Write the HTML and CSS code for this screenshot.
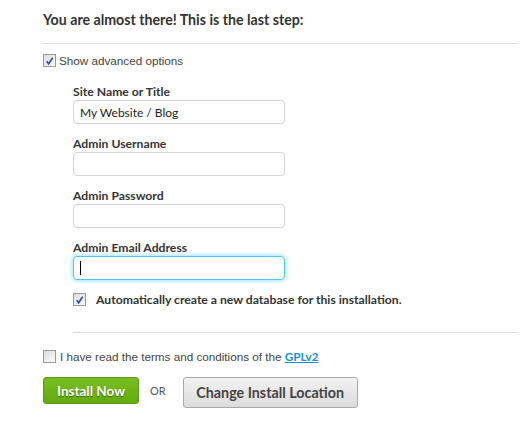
FILE: index.html
```html
<!DOCTYPE html>
<html>
<head>
<meta charset="utf-8">
<link rel="stylesheet" href="styles.css">
</head>
<body>
<div class="page">
  <h2 class="title">You are almost there! This is the last step:</h2>
  <hr class="rule">
  <label class="check-row small">
    <span class="cb checked"><svg viewBox="0 0 12 12" width="12" height="12"><path d="M3 6.2 L5 9 L9.5 2.5" fill="none" stroke="#2b4fb8" stroke-width="1.8"/></svg></span>
    <span>Show advanced options</span>
  </label>

  <div class="advanced">
    <div class="field">
      <div class="label">Site Name or Title</div>
      <div class="input">My Website / Blog</div>
    </div>
    <div class="field">
      <div class="label">Admin Username</div>
      <div class="input"></div>
    </div>
    <div class="field">
      <div class="label">Admin Password</div>
      <div class="input"></div>
    </div>
    <div class="field">
      <div class="label">Admin Email Address</div>
      <div class="input focus"><span class="caret"></span></div>
    </div>
    <label class="check-row db">
      <span class="cb checked"><svg viewBox="0 0 12 12" width="12" height="12"><path d="M3 6.2 L5 9 L9.5 2.5" fill="none" stroke="#2b4fb8" stroke-width="1.8"/></svg></span>
      <span class="db-text">Automatically create a new database for this installation.</span>
    </label>
    <hr class="rule inner">
  </div>

  <label class="check-row small terms">
    <span class="cb"></span>
    <span>I have read the terms and conditions of the <a class="gpl" href="#">GPLv2</a></span>
  </label>

  <div class="actions">
    <button class="btn green">Install Now</button>
    <span class="or">OR</span>
    <button class="btn grey">Change Install Location</button>
  </div>
</div>
</body>
</html>
```

FILE: styles.css
```css
html, body {
  margin: 0;
  padding: 0;
  background: #fff;
}
.page {
  padding: 10px 12px 0 42px;
  font-family: Lato, "Liberation Sans", sans-serif;
  color: #333;
}
.title {
  margin: 0;
  font-size: 14.2px;
  font-weight: 700;
  color: #333;
  line-height: 20px;
  padding-left: 1px;
}
.rule {
  border: 0;
  border-top: 1px solid #d9d9d9;
  margin: 13px 0 0 0;
  height: 0;
}
.check-row {
  display: flex;
  align-items: center;
}
.small {
  font-family: "Liberation Sans", Arial, sans-serif;
  font-size: 11.7px;
  color: #444;
  margin-top: 10px;
  padding-left: 1px;
}
.cb {
  width: 11px;
  height: 11px;
  border: 1px solid #9a9a9a;
  background: linear-gradient(135deg, #dcdcdc, #fbfbfb);
  display: inline-flex;
  align-items: center;
  justify-content: center;
  flex: none;
  margin-right: 3px;
}
.cb svg {
  display: block;
}
.advanced {
  padding-left: 31px;
  padding-top: 17px;
}
.field {
  margin-bottom: 12px;
}
.label {
  font-size: 12.2px;
  font-weight: 700;
  color: #333;
  line-height: 16px;
}
.input {
  box-sizing: border-box;
  width: 212px;
  height: 24px;
  border: 1px solid #d4d4d4;
  border-radius: 4px;
  font-size: 12px;
  color: #222;
  padding: 0 6px;
  display: flex;
  align-items: center;
}
.input.focus {
  border-color: #4fc6ee;
  box-shadow: 0 0 4px 1px rgba(80, 200, 240, 0.55);
}
.caret {
  width: 1px;
  height: 14px;
  background: #000;
}
.db {
  margin-top: 2px;
}
.db .cb {
  margin-right: 10px;
}
.db-text {
  font-size: 12.2px;
  font-weight: 700;
  color: #333;
}
.rule.inner {
  margin-top: 25px;
}
.terms {
  margin-top: 16px;
}
.terms .cb {
  margin-right: 4px;
}
.gpl {
  color: #1a8fd6;
  font-weight: 700;
  font-family: Lato, "Liberation Sans", sans-serif;
}
.actions {
  display: flex;
  align-items: flex-start;
  margin-top: 14px;
  padding-left: 1px;
}
.btn {
  font-family: Lato, "Liberation Sans", sans-serif;
  font-weight: 700;
  border-radius: 3px;
  cursor: pointer;
  padding: 0;
}
.green {
  width: 96px;
  height: 27px;
  font-size: 13.5px;
  background: linear-gradient(#79be21, #64ab10);
  border: 1px solid #5a9a12;
  color: #fff;
  text-shadow: 0 1px 1px rgba(0, 0, 0, 0.45);
}
.or {
  font-size: 11px;
  color: #555;
  margin: 7px 17px 0 11px;
}
.grey {
  width: 175px;
  height: 31px;
  font-size: 14.3px;
  background: linear-gradient(#f2f2f2, #dcdcdc);
  border: 1px solid #a9a9a9;
  color: #444;
}
```
